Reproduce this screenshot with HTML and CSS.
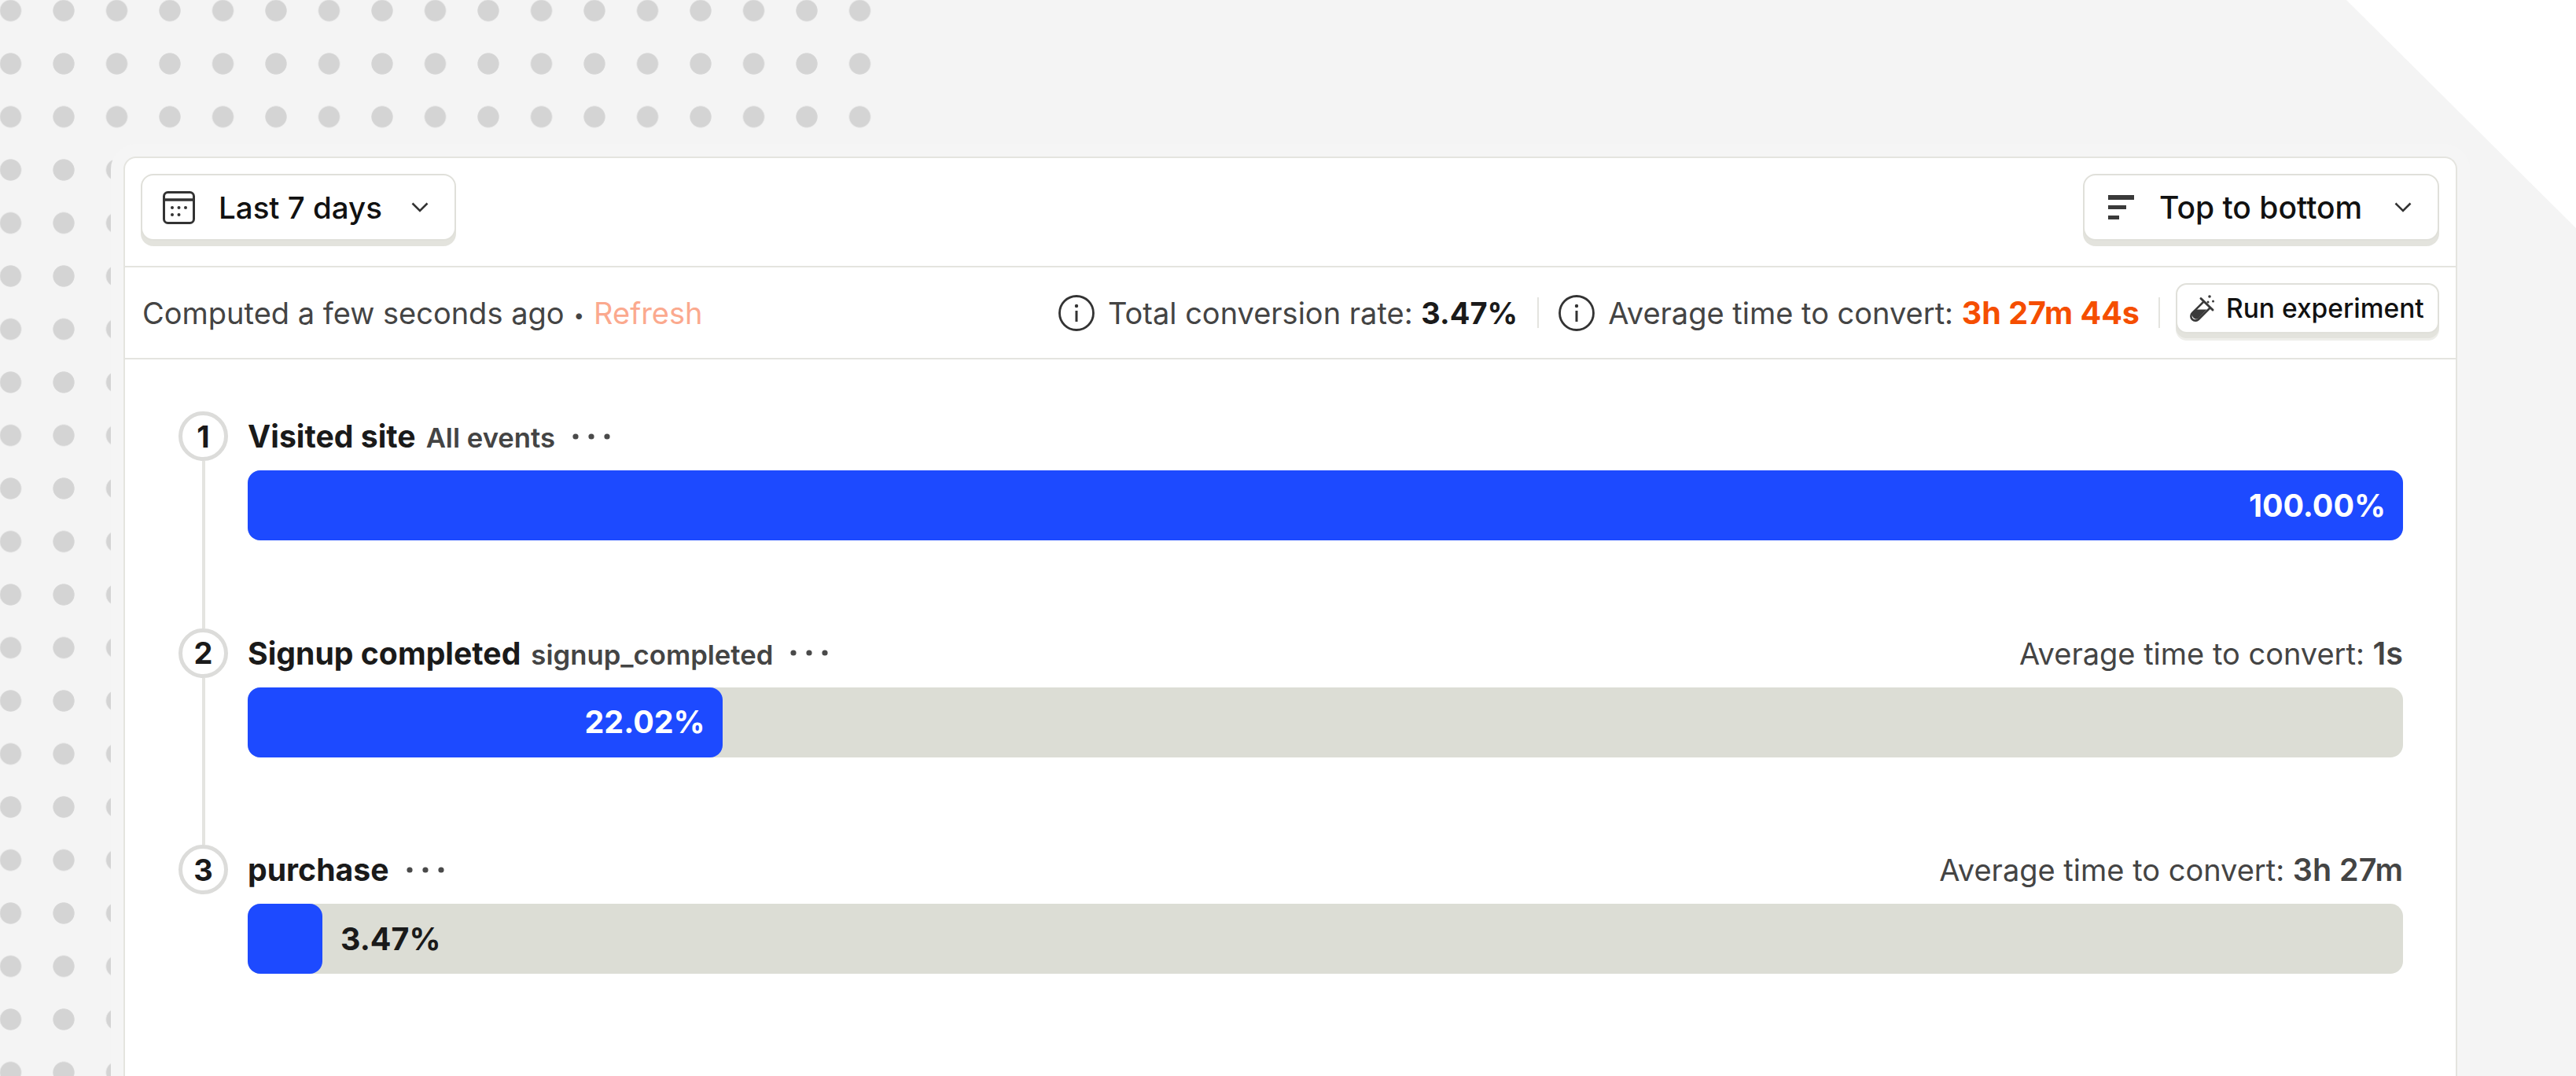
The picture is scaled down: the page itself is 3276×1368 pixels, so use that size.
FILE: index.html
```html
<!DOCTYPE html>
<html lang="en">
<head>
<meta charset="utf-8">
<title>Funnel</title>
<link rel="stylesheet" href="styles.css">
</head>
<body>
<div class="dots"></div>
<div class="corner"></div>
<main class="card">
  <header class="bar-top">
    <button class="btn btn-lg">
      <svg class="ic-cal" viewBox="0 0 41 42" fill="none"><rect x="1.5" y="1.5" width="38" height="39" rx="5" stroke="#333" stroke-width="3"/><path d="M2 11h37" stroke="#333" stroke-width="3.5"/><g fill="#333"><circle cx="12" cy="21" r="2"/><circle cx="20.500" cy="21" r="2"/><circle cx="29" cy="21" r="2"/><circle cx="12" cy="30" r="2"/><circle cx="20.500" cy="30" r="2"/></g></svg>
      <span class="btn-label">Last 7 days</span>
      <svg class="ic-chev" viewBox="0 0 22 13" fill="none"><path d="M1.500 1.500 11 11l9.500-9.500" stroke="#333" stroke-width="2.600"/></svg>
    </button>
    <button class="btn btn-lg btn-order">
      <svg class="ic-order" viewBox="0 0 33 31" fill="#3a3a3a"><rect width="33" height="6"/><rect y="13" width="23" height="5"/><rect y="26" width="14" height="5"/></svg>
      <span class="btn-label">Top to bottom</span>
      <svg class="ic-chev" viewBox="0 0 22 13" fill="none"><path d="M1.500 1.500 11 11l9.500-9.500" stroke="#333" stroke-width="2.600"/></svg>
    </button>
  </header>
  <section class="bar-info">
    <p class="computed">Computed a few seconds ago<span class="bullet">•</span><span class="refresh">Refresh</span></p>
    <div class="metrics">
      <svg class="ic-info" viewBox="0 0 46 46" fill="none"><circle cx="23" cy="23" r="21.500" stroke="#333" stroke-width="2.800"/><circle cx="23" cy="14" r="2.200" fill="#333"/><path d="M23 20v14" stroke="#333" stroke-width="3"/></svg>
      <span class="metric">Total conversion rate: <b>3.47%</b></span>
      <i class="sep"></i>
      <svg class="ic-info" viewBox="0 0 46 46" fill="none"><circle cx="23" cy="23" r="21.500" stroke="#333" stroke-width="2.800"/><circle cx="23" cy="14" r="2.200" fill="#333"/><path d="M23 20v14" stroke="#333" stroke-width="3"/></svg>
      <span class="metric">Average time to convert: <b class="hot">3h 27m 44s</b></span>
      <i class="sep sep-last"></i>
      <button class="btn btn-sm">
        <svg class="ic-flask" viewBox="0 0 33 35" fill="none"><path d="M19 9 4 24a5.500 5.500 0 0 0 8 8L27 17" stroke="#3a3a3a" stroke-width="2.600"/><path d="M15 5.500 30 20" stroke="#3a3a3a" stroke-width="3" stroke-linecap="round"/><path d="M9.500 19.500h13L12 30.500a5 5 0 0 1-7-7z" fill="#3a3a3a"/><g fill="#3a3a3a"><circle cx="26" cy="3" r="1.800"/><circle cx="30.500" cy="9" r="1.500"/><circle cx="24" cy="10" r="1.500"/></g></svg>
        <span>Run experiment</span>
      </button>
    </div>
  </section>
  <ol class="steps">
    <li class="step">
      <div class="rail"><span class="num">1</span><span class="line"></span></div>
      <div class="body">
        <div class="head">
          <strong class="title">Visited site</strong><span class="sub">All events</span>
          <svg class="more" viewBox="0 0 48 8" fill="#4a4a4a"><circle cx="4" cy="4" r="3.600"/><circle cx="24" cy="4" r="3.600"/><circle cx="44" cy="4" r="3.600"/></svg>
        </div>
        <div class="track"><div class="fill" style="width:100%"><span class="pct">100.00%</span></div></div>
      </div>
    </li>
    <li class="step">
      <div class="rail"><span class="num">2</span><span class="line"></span></div>
      <div class="body">
        <div class="head">
          <strong class="title">Signup completed</strong><span class="sub">signup_completed</span>
          <svg class="more" viewBox="0 0 48 8" fill="#4a4a4a"><circle cx="4" cy="4" r="3.600"/><circle cx="24" cy="4" r="3.600"/><circle cx="44" cy="4" r="3.600"/></svg>
          <span class="avg">Average time to convert: <b>1s</b></span>
        </div>
        <div class="track"><div class="fill" style="width:22.02%"><span class="pct">22.02%</span></div></div>
      </div>
    </li>
    <li class="step">
      <div class="rail"><span class="num">3</span></div>
      <div class="body">
        <div class="head">
          <strong class="title">purchase</strong>
          <svg class="more" viewBox="0 0 48 8" fill="#4a4a4a"><circle cx="4" cy="4" r="3.600"/><circle cx="24" cy="4" r="3.600"/><circle cx="44" cy="4" r="3.600"/></svg>
          <span class="avg">Average time to convert: <b>3h 27m</b></span>
        </div>
        <div class="track"><div class="fill" style="width:3.47%"></div><span class="pct pct-out">3.47%</span></div>
      </div>
    </li>
  </ol>
</main>
</body>
</html>
```
FILE: styles.css
```css
* { box-sizing: border-box; }
html, body { margin: 0; height: 1368px; overflow: hidden; }
body {
  background: #f4f4f4;
  font-family: Inter, "Liberation Sans", sans-serif;
  color: #1a1a1a;
  padding: 199px 151px 0 157px;
  position: relative;
}
.dots {
  position: absolute; left: 0; top: 0; width: 1110px; height: 1368px;
  background-image: radial-gradient(circle at center, #d4d4d4 13.2px, transparent 14px);
  background-size: 67.5px 67.5px;
  background-position: -20.25px -20.25px;
}
.corner {
  position: absolute; right: 0; top: 0; width: 292px; height: 290px;
  background: #fff;
  clip-path: polygon(0 0, 100% 0, 100% 100%);
}
.card {
  position: relative;
  height: 1169px;
  background: #fff;
  border: 2px solid #e4e4df;
  border-bottom: 0;
  border-radius: 16px 16px 0 0;
  box-shadow: 0 0 0 16px #f5f5f5;
}
.bar-top {
  height: 139px;
  padding: 0 21px 12px 20px;
  display: flex; align-items: center; justify-content: space-between;
  border-bottom: 2px solid #e4e4df;
}
.btn {
  display: flex; align-items: center;
  background: #fff;
  border: 2px solid #e0e0da;
  font-family: inherit;
  color: #111;
  padding: 0;
}
.btn-lg {
  height: 85px; border-radius: 16px;
  box-shadow: 0 7px 0 #e3e3dd;
  padding-left: 26px;
  width: 401px;
  font-size: 38.5px; font-weight: 500;
}
.btn-order { width: 453px; padding-left: 30px; font-size: 39px; }
.btn-label { margin-left: 30px; }
.btn-order .btn-label { margin-left: 32px; }
.ic-cal { width: 41px; height: 42px; flex: none; }
.ic-order { width: 33px; height: 31px; flex: none; }
.ic-chev { width: 22px; height: 13px; flex: none; margin-left: auto; margin-right: 33px; }
.bar-info {
  height: 117px;
  padding: 0 21px 0 22px;
  display: flex; align-items: center; justify-content: space-between;
  border-bottom: 2px solid #e4e4df;
  font-size: 38px; color: #444;
}
.computed { margin: 0; }
.bullet { margin: 0 12px; font-size: 24px; vertical-align: 3px; }
.refresh { color: #fba98e; }
.metrics { display: flex; align-items: center; }
.ic-info { width: 46px; height: 46px; flex: none; margin-right: 17px; }
.metric { white-space: pre; }
.metric b { font-weight: 700; color: #1a1a1a; }
.metric b.hot { color: #f54e00; font-size: 39.5px; }
.sep { width: 2px; height: 39px; background: #e4e4df; margin: 0 25px; }
.sep-last { margin: 0 20px 0 24px; }
.btn-sm {
  margin-bottom: 12px;
  width: 335px; height: 64px; border-radius: 14px;
  box-shadow: 0 6px 0 #e3e3dd, 0 9px 0 #eeeeea;
  padding-left: 15px;
  font-size: 33.5px; font-weight: 500;
}
.ic-flask { width: 33px; height: 35px; flex: none; margin-right: 14px; }
.steps { list-style: none; margin: 0; padding: 66px 67px 0 68px; }
.step { display: flex; }
.rail { width: 63px; flex: none; margin-right: 25px; display: flex; flex-direction: column; align-items: center; }
.num {
  width: 63px; height: 63px; flex: none; border-radius: 50%;
  border: 5px solid #dcdcda;
  display: flex; align-items: center; justify-content: center;
  font-size: 38px; font-weight: 700;
}
.line { flex: 1; width: 4px; background: #e4e4e0; }
.body { flex: 1; min-width: 0; padding-bottom: 111.5px; }
.head { height: 63px; margin-bottom: 12px; display: flex; align-items: baseline; padding-top: 8px; }
.title { font-size: 39.2px; font-weight: 700; }
.sub { font-size: 34.7px; font-weight: 600; color: #444; margin-left: 13px; }
.more { width: 48px; height: 8px; margin-left: 22px; align-self: center; flex: none; position: relative; top: -4px; }
.avg { margin-left: auto; font-size: 38px; color: #444; }
.avg b { font-weight: 600; font-size: 39.5px; }
.track { height: 89px; border-radius: 16px; background: #dcddd5; display: flex; align-items: center; }
.fill { height: 100%; background: #1d4aff; border-radius: 16px; display: flex; align-items: center; justify-content: flex-end; flex: none; padding-right: 22px; }
.pct { font-size: 39.4px; font-weight: 700; color: #fff; }
.pct-out { color: #1a1a1a; margin-left: 23px; }
```
